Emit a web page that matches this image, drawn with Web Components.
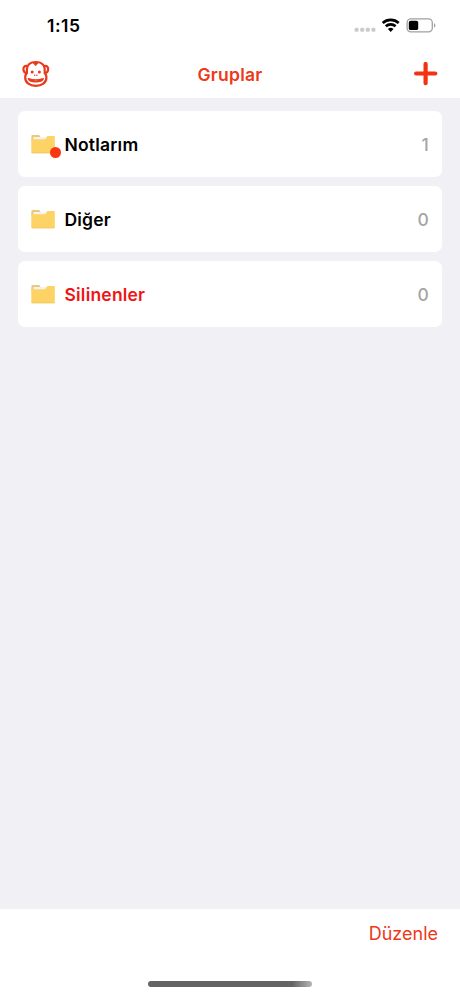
<!DOCTYPE html>
<html lang="tr">
<head>
<meta charset="utf-8">
<title>Gruplar</title>
<style>
    body {
        margin: 0;
        font-family: Inter, "Liberation Sans", sans-serif;
        background: #fff;
    }
</style>
</head>
<body>
<phone-screen>
    <status-bar slot="status" time="1:15"></status-bar>
    <nav-bar slot="nav">Gruplar</nav-bar>
    <group-row count="1" active>Notlarım</group-row>
    <group-row count="0">Diğer</group-row>
    <group-row count="0" deleted>Silinenler</group-row>
    <tool-bar slot="tools">Düzenle</tool-bar>
</phone-screen>

<script>
class PhoneScreen extends HTMLElement {
    constructor() {
        super();
        this.attachShadow({ mode: 'open' }).innerHTML = `
            <style>
                :host {
                    display: flex;
                    flex-direction: column;
                    width: 460px;
                    height: 996px;
                    overflow: hidden;
                }

                main {
                    flex: 1;
                    display: flex;
                    flex-direction: column;
                    gap: 9px;
                    padding: 13px 18px;
                    background: #f1f0f5;
                }
            </style>
            <slot name="status"></slot>
            <slot name="nav"></slot>
            <main><slot></slot></main>
            <slot name="tools"></slot>
        `;
    }
}

class StatusBar extends HTMLElement {
    constructor() {
        super();
        this.attachShadow({ mode: 'open' });
    }

    connectedCallback() {
        this.shadowRoot.innerHTML = `
            <style>
                :host {
                    display: flex;
                    align-items: center;
                    justify-content: space-between;
                    box-sizing: border-box;
                    height: 50px;
                    padding: 0 24px 0 47px;
                }

                .time {
                    font-size: 17.5px;
                    font-weight: 600;
                    letter-spacing: 0.5px;
                }

                .icons {
                    display: flex;
                    align-items: center;
                }

                svg {
                    display: block;
                }
            </style>
            <span class="time">${this.getAttribute('time')}</span>
            <div class="icons">
                <svg width="82" height="20" viewBox="0 0 82 20">
                    <!-- signal dots -->
                    <g fill="#cbcbcb">
                        <rect x="0.6" y="12.8" width="4" height="4" rx="1.4"/>
                        <rect x="6.2" y="12.8" width="4" height="4" rx="1.4"/>
                        <rect x="11.8" y="12.8" width="4" height="4" rx="1.4"/>
                        <rect x="17.4" y="12.8" width="4" height="4" rx="1.4"/>
                    </g>
                    <!-- wifi -->
                    <g fill="none" stroke="#000" stroke-width="2.7">
                        <path d="M28.7 7.9a12 12 0 0 1 16 0"/>
                        <path d="M31.8 11.3a7.2 7.2 0 0 1 9.8 0"/>
                    </g>
                    <path d="M33.9 14a4.2 4.2 0 0 1 5.6 0l-2.8 2.9z"/>
                    <!-- battery -->
                    <rect x="53.1" y="3.9" width="25.2" height="13" rx="3.8" fill="#fff" stroke="#a0a0a0" stroke-width="1.3"/>
                    <rect x="54.8" y="5.7" width="9.4" height="9.4" rx="1.9"/>
                    <path d="M80 8.2c1.8.5 1.8 3.9 0 4.4z" fill="#a0a0a0"/>
                </svg>
            </div>
        `;
    }
}

class NavBar extends HTMLElement {
    constructor() {
        super();
        this.attachShadow({ mode: 'open' }).innerHTML = `
            <style>
                :host {
                    display: grid;
                    grid-template-columns: 1fr auto 1fr;
                    align-items: center;
                    box-sizing: border-box;
                    height: 48px;
                    padding: 0 22px;
                    color: #ee3818;
                }

                h1 {
                    margin: 0;
                    font-size: 17.5px;
                    font-weight: 600;
                    letter-spacing: 0.25px;
                }

                svg {
                    display: block;
                }

                .add {
                    justify-self: end;
                }
            </style>
            <svg width="28" height="28" viewBox="0 0 28 28" fill="none" stroke="#e93a1c" stroke-width="2.2" stroke-linecap="round" stroke-linejoin="round">
                <!-- ears -->
                <path d="M4.6 5.9C2.7 5.6 1.3 7.3 1.4 9.3c.1 2 1.3 3.6 3.3 3.8"/>
                <path d="M23 5.9c1.9-.3 3.3 1.4 3.2 3.4-.1 2-1.3 3.6-3.3 3.8"/>
                <!-- head, with the hair dipping in the middle -->
                <path d="M4.9 13.1V8.6C5.4 4.6 8.6 2 13.8 2s8.4 2.6 8.9 6.6v4.5c1.2 1.3 1.7 2.7 1.7 4.3 0 5.3-4.6 8.4-10.6 8.4S3.2 22.7 3.2 17.4c0-1.6.5-3 1.7-4.3z"/>
                <path d="M11.6 3h4.4l-2.2 2.6z" fill="#e93a1c" stroke-width=".8"/>
                <!-- mouth -->
                <path d="M6.4 18.7c4.5 1.5 10.3 1.5 14.8 0-.8 2-3.6 3-7.4 3s-6.6-1-7.4-3z" stroke-width="1.6"/>
                <g fill="#e93a1c" stroke="none">
                    <circle cx="10.2" cy="12" r="1.5"/>
                    <circle cx="17.4" cy="12" r="1.5"/>
                    <circle cx="12.7" cy="15.2" r=".75"/>
                    <circle cx="14.9" cy="15.2" r=".75"/>
                </g>
            </svg>
            <h1><slot></slot></h1>
            <svg class="add" width="24" height="24" viewBox="0 0 24 24" stroke="#f43211" stroke-width="4.2" stroke-linecap="round">
                <path d="M11.6 2v19.2M2.1 11.5h19.2"/>
            </svg>
        `;
    }
}

class GroupRow extends HTMLElement {
    constructor() {
        super();
        this.attachShadow({ mode: 'open' });
    }

    connectedCallback() {
        this.shadowRoot.innerHTML = `
            <style>
                :host {
                    display: flex;
                    align-items: center;
                    box-sizing: border-box;
                    height: 66px;
                    padding: 0 13px;
                    border-radius: 7px;
                    background: #fff;
                    font-size: 17.5px;
                    font-weight: 600;
                    letter-spacing: 0.2px;
                }

                :host([deleted]) {
                    color: #ef1515;
                }

                .folder {
                    position: relative;
                    width: 24px;
                    height: 20px;
                    margin-right: 9.5px;
                }

                svg {
                    display: block;
                }

                /* Red badge over the corner of the folder */
                .badge {
                    display: none;
                    position: absolute;
                    left: 19px;
                    top: 13px;
                    width: 11px;
                    height: 11px;
                    border-radius: 50%;
                    background: #fa3612;
                }

                :host([active]) .badge {
                    display: block;
                }

                .name {
                    flex: 1;
                }

                .count {
                    color: #a5a5a5;
                    font-weight: 500;
                }
            </style>
            <div class="folder">
                <svg width="24" height="20" viewBox="0 0 24 20">
                    <path d="M.4 2a1 1 0 0 1 1-1h6.8l1.2 1.7v4H.4z" fill="#e8c97c"/>
                    <path d="M2.4 3h12.8v4.5H2.4z" fill="#f2f2ee"/>
                    <path d="M.3 4.6c1.1 0 1.7.6 3 .6h10.5c1.5 0 1.5-3.2 3.1-3.2h6.2a.7.7 0 0 1 .7.7v15.5a1 1 0 0 1-1 1H1.3a1 1 0 0 1-1-1z" fill="#fcd364"/>
                    <path d="M.3 18.2h23.5a1 1 0 0 1-1 1H1.3a1 1 0 0 1-1-1z" fill="#f3ca62"/>
                </svg>
                <div class="badge"></div>
            </div>
            <span class="name"><slot></slot></span>
            <span class="count">${this.getAttribute('count')}</span>
        `;
    }
}

class ToolBar extends HTMLElement {
    constructor() {
        super();
        this.attachShadow({ mode: 'open' }).innerHTML = `
            <style>
                :host {
                    display: flex;
                    flex-direction: column;
                    justify-content: space-between;
                    box-sizing: border-box;
                    height: 87px;
                    padding: 13px 22px 9px;
                    background: #fff;
                }

                .action {
                    align-self: flex-end;
                    color: #ee3818;
                    font-size: 18px;
                    line-height: 24px;
                }

                .home {
                    align-self: center;
                    width: 164px;
                    height: 6px;
                    border-radius: 3px;
                    background: linear-gradient(90deg, #646464 88%, #b4b4b4);
                }
            </style>
            <span class="action"><slot></slot></span>
            <div class="home"></div>
        `;
    }
}

customElements.define('phone-screen', PhoneScreen);
customElements.define('status-bar', StatusBar);
customElements.define('nav-bar', NavBar);
customElements.define('group-row', GroupRow);
customElements.define('tool-bar', ToolBar);
</script>
</body>
</html>
